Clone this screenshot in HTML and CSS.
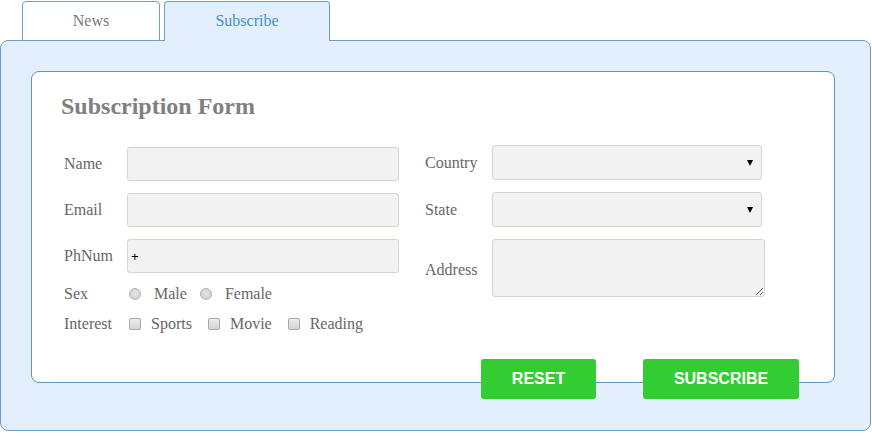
FILE: index.html
```html
<!DOCTYPE html>
<html>
<head>
<meta charset="utf-8">
<link rel="stylesheet" href="styles.css">
</head>
<body>
<div class="tabs">
  <div class="tab">News</div>
  <div class="tab active">Subscribe</div>
</div>
<div class="panel">
  <div class="card">
    <h2 class="title">Subscription Form</h2>
    <div class="cols">
      <div class="col left">
        <div class="row"><label class="lbl">Name</label><input class="field" type="text"></div>
        <div class="row"><label class="lbl">Email</label><input class="field" type="text"></div>
        <div class="row"><label class="lbl">PhNum</label><input class="field" type="text" value="+"></div>
        <div class="opt-row sex">
          <span class="lbl">Sex</span>
          <span class="opt"><input class="radio" type="radio" name="sex"><span>Male</span></span>
          <span class="opt"><input class="radio r2" type="radio" name="sex"><span>Female</span></span>
        </div>
        <div class="opt-row interest">
          <span class="lbl">Interest</span>
          <span class="opt"><input class="check" type="checkbox"><span>Sports</span></span>
          <span class="opt"><input class="check" type="checkbox"><span>Movie</span></span>
          <span class="opt"><input class="check" type="checkbox"><span>Reading</span></span>
        </div>
      </div>
      <div class="col right">
        <div class="row"><label class="lbl">Country</label><div class="sel-wrap"><select class="sel"></select></div></div>
        <div class="row"><label class="lbl">State</label><div class="sel-wrap"><select class="sel"></select></div></div>
        <div class="row"><label class="lbl addr">Address</label><textarea class="area"></textarea></div>
      </div>
    </div>
    <div class="buttons">
      <button class="btn reset">RESET</button>
      <button class="btn subscribe">SUBSCRIBE</button>
    </div>
  </div>
</div>
</body>
</html>
```
FILE: styles.css
```css
* { box-sizing: border-box; }
html, body { margin: 0; padding: 0; background: #ffffff; }
body {
  font-family: "Liberation Serif", "Times New Roman", serif;
  font-size: 16px;
  color: #666666;
}
.tabs {
  display: flex;
  gap: 4px;
  padding: 1px 0 0 22px;
  height: 41px;
}
.tab {
  position: relative;
  z-index: 1;
  width: 138px;
  height: 40px;
  border: 1px solid #6c9fc3;
  border-radius: 4px 4px 0 0;
  background: #ffffff;
  color: #777777;
  display: flex;
  align-items: center;
  justify-content: center;
  padding-bottom: 1px;
  font-size: 16px;
}
.tab.active {
  width: 166px;
  background: #e3effc;
  border-bottom: none;
  color: #4a8fd0;
}
.panel {
  margin-top: -1px;
  width: 871px;
  height: 391px;
  border: 1px solid #6c9fc3;
  border-radius: 8px;
  background: #e3effc;
  padding: 30px 0 0 30px;
}
.card {
  width: 804px;
  height: 312px;
  background: #ffffff;
  border: 1px solid #5b95c2;
  border-radius: 8px;
  padding: 21px 35px 0 29px;
}
.title {
  margin: 0;
  font-size: 24px;
  line-height: 26px;
  font-weight: bold;
  color: #808080;
}
.cols {
  display: flex;
  align-items: flex-start;
  gap: 26px;
  margin-top: 26px;
  padding-left: 3px;
}
.col { display: flex; flex-direction: column; }
.col.left { width: 335px; padding-top: 2px; gap: 12px; }
.col.right { gap: 12px; }
.row { display: flex; align-items: center; }
.left .lbl { width: 63px; flex: none; }
.right .lbl { width: 67px; flex: none; }
.lbl { color: #666666; font-size: 16px; }
.lbl.addr { padding-top: 4px; }
.field {
  width: 272px;
  height: 34px;
  border: 1px solid #d6d6ca;
  border-radius: 3px;
  background: #f2f2f2;
  font-family: "Liberation Sans", Arial, sans-serif;
  font-size: 13px;
  color: #000;
  padding: 0 3px;
  margin: 0;
}
.sel-wrap { position: relative; width: 270px; height: 35px; }
.sel {
  appearance: none;
  -webkit-appearance: none;
  width: 270px;
  height: 35px;
  border: 1px solid #d6d6ca;
  border-radius: 3px;
  background: #f2f2f2;
  margin: 0;
}
.sel-wrap::after {
  content: "";
  position: absolute;
  right: 9px;
  top: 15px;
  border-left: 3.5px solid transparent;
  border-right: 3.5px solid transparent;
  border-top: 6px solid #000;
}
.area {
  width: 273px;
  height: 58px;
  border: 1px solid #d6d6ca;
  border-radius: 3px;
  background: #f2f2f2;
  margin: 0;
  resize: both;
}
.opt-row {
  display: flex;
  align-items: center;
  height: 20px;
}
.col.left .sex { margin-top: -1px; }
.col.left .interest { margin-top: -2px; }
.opt-row .lbl { width: 63px; flex: none; }
.opt { display: flex; align-items: center; }
.radio, .check {
  appearance: none;
  -webkit-appearance: none;
  width: 12px;
  height: 12px;
  margin: 0 13px 0 2px;
  flex: none;
}
.radio {
  border: 1px solid #b4b4b4;
  border-radius: 50%;
  background: radial-gradient(circle at 50% 45%, #e6e6e6 0%, #d2d2d2 70%, #c6c6c6 100%);
}
.sex .opt + .opt { margin-left: 13px; }
.sex .opt + .opt .radio { margin-left: 0; }
.check {
  border: 1px solid #a8a8a8;
  border-radius: 2px;
  background: linear-gradient(#ececec, #d4d4d4);
  margin-right: 10px;
}
.interest .opt + .opt { margin-left: 16px; }
.interest .opt + .opt .check { margin-left: 0; }
.buttons {
  display: flex;
  justify-content: flex-end;
  gap: 47px;
  margin-top: 25px;
}
.btn {
  height: 40px;
  border: none;
  border-radius: 3px;
  background: #33cc33;
  color: #ffffff;
  font-family: "Liberation Sans", Arial, sans-serif;
  font-weight: bold;
  font-size: 16px;
  padding: 0;
  margin: 0;
}
.btn.reset { width: 115px; }
.btn.subscribe { width: 156px; }
```
